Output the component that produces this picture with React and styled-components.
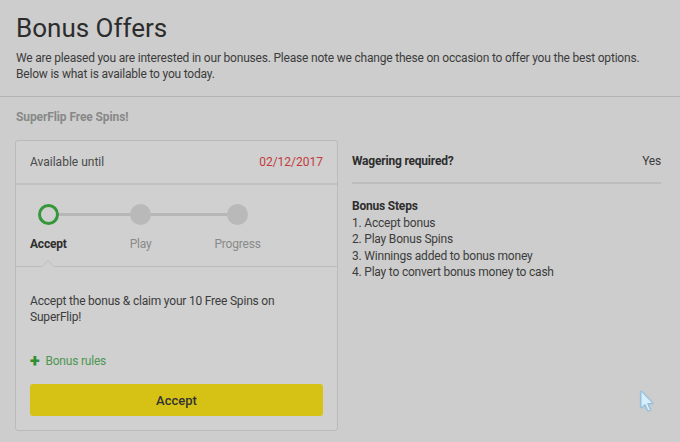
import React from "react";
import styled, { createGlobalStyle } from "styled-components";

const GlobalStyle = createGlobalStyle`
  html, body {
    margin: 0;
    padding: 0;
    background: #cdcdcd;
    font-family: Roboto, "Liberation Sans", Arial, sans-serif;
    color: #3a3a3a;
  }
  * { box-sizing: border-box; }
`;

const steps = ["Accept", "Play", "Progress"];
const bonusSteps = [
  "1. Accept bonus",
  "2. Play Bonus Spins",
  "3. Winnings added to bonus money",
  "4. Play to convert bonus money to cash",
];

function Cursor() {
  return (
    <CursorWrap width="22" height="26" viewBox="0 0 22 26">
      <defs>
        <filter id="glow" x="-50%" y="-50%" width="200%" height="200%">
          <feGaussianBlur stdDeviation="1.4" />
        </filter>
      </defs>
      <path
        d="M3 2 L3 19 L7 15.5 L10 22 L12.5 21 L9.6 14.6 L15 14.4 Z"
        fill="#5aa8e0"
        opacity="0.55"
        filter="url(#glow)"
      />
      <path
        d="M3 2 L3 19 L7 15.5 L10 22 L12.5 21 L9.6 14.6 L15 14.4 Z"
        fill="#d9eefb"
        stroke="#7ab6de"
        strokeWidth="0.8"
      />
    </CursorWrap>
  );
}

export default function App() {
  return (
    <Page>
      <GlobalStyle />
      <Intro>
        <Title>Bonus Offers</Title>
        <Lead>
          We are pleased you are interested in our bonuses. Please note we change these on
          occasion to offer you the best options. Below is what is available to you today.
        </Lead>
      </Intro>
      <Offer>
        <OfferName>SuperFlip Free Spins!</OfferName>
        <OfferGrid>
          <Card>
            <CardHeader>
              <span>Available until</span>
              <DateText>02/12/2017</DateText>
            </CardHeader>
            <Stepper>
              <Track />
              {steps.map((s, i) => (
                <Step key={s}>
                  <Dot $active={i === 0} />
                  <StepLabel $active={i === 0}>{s}</StepLabel>
                </Step>
              ))}
              <Caret />
            </Stepper>
            <CardBody>
              <Description>
                Accept the bonus &amp; claim your 10 Free Spins on SuperFlip!
              </Description>
              <RulesLink>
                <Plus>+</Plus>
                Bonus rules
              </RulesLink>
              <AcceptButton>Accept</AcceptButton>
            </CardBody>
          </Card>
          <Details>
            <DetailRow>
              <strong>Wagering required?</strong>
              <span>Yes</span>
            </DetailRow>
            <StepsBlock>
              <StepsTitle>Bonus Steps</StepsTitle>
              {bonusSteps.map((s) => (
                <div key={s}>{s}</div>
              ))}
            </StepsBlock>
          </Details>
        </OfferGrid>
      </Offer>
      <Cursor />
    </Page>
  );
}

const Page = styled.div`
  position: relative;
  width: 680px;
  height: 442px;
  overflow: hidden;
`;

const Intro = styled.div`
  padding: 12px 16px 14px;
  border-bottom: 1px solid #b3b3b3;
`;

const Title = styled.h1`
  margin: 0 0 6px;
  font-size: 26px;
  line-height: 32px;
  font-weight: 400;
  color: #2c2c2c;
`;

const Lead = styled.p`
  margin: 0;
  width: 640px;
  font-size: 12px;
  line-height: 16px;
  letter-spacing: -0.2px;
  color: #3c3c3c;
`;

const Offer = styled.div`
  padding: 13px 19px 0 15px;
`;

const OfferName = styled.div`
  padding-left: 1px;
  font-size: 12px;
  line-height: 14px;
  font-weight: 700;
  letter-spacing: -0.1px;
  color: #888;
  margin-bottom: 16px;
`;

const OfferGrid = styled.div`
  display: grid;
  grid-template-columns: 323px 1fr;
  gap: 14px;
  align-items: start;
`;

const Card = styled.div`
  border: 1px solid #bababa;
  border-radius: 3px;
  background: #d0d0d0;
`;

const CardHeader = styled.div`
  height: 44px;
  display: flex;
  align-items: center;
  justify-content: space-between;
  padding: 0 14px;
  border-bottom: 2px solid #c0c0c0;
  font-size: 12px;
  color: #4a4a4a;
`;

const DateText = styled.span`
  color: #c23a3a;
`;

const Stepper = styled.div`
  position: relative;
  display: flex;
  gap: 63px;
  padding: 19px 14px 15px;
  border-bottom: 1px solid #bcbcbc;
`;

const Track = styled.div`
  position: absolute;
  top: 28px;
  left: 32px;
  width: 190px;
  height: 3px;
  background: #b7b7b7;
`;

const Step = styled.div`
  position: relative;
  display: flex;
  flex-direction: column;
  align-items: center;
  gap: 12px;
`;

const Dot = styled.div`
  width: 21px;
  height: 21px;
  border-radius: 50%;
  background: ${(p) => (p.$active ? "#d0d0d0" : "#b9b9b9")};
  border: ${(p) => (p.$active ? "3px solid #36973a" : "none")};
`;

const StepLabel = styled.div`
  font-size: 12px;
  line-height: 14px;
  letter-spacing: -0.2px;
  font-weight: ${(p) => (p.$active ? 700 : 400)};
  color: ${(p) => (p.$active ? "#2e2e2e" : "#8a8a8a")};
`;

const Caret = styled.div`
  position: absolute;
  left: 25px;
  bottom: -1px;
  width: 14px;
  height: 8px;
  &::before,
  &::after {
    content: "";
    position: absolute;
    left: 0;
    border-left: 7px solid transparent;
    border-right: 7px solid transparent;
  }
  &::before {
    bottom: 0;
    border-bottom: 7px solid #bcbcbc;
  }
  &::after {
    bottom: -1px;
    border-bottom: 7px solid #d0d0d0;
  }
`;

const CardBody = styled.div`
  padding: 26px 14px 14px;
`;

const Description = styled.p`
  margin: 0;
  width: 262px;
  font-size: 12px;
  line-height: 16px;
  letter-spacing: -0.2px;
  color: #3c3c3c;
`;

const RulesLink = styled.div`
  display: flex;
  align-items: center;
  gap: 6px;
  margin-top: 28px;
  font-size: 12px;
  line-height: 16px;
  letter-spacing: -0.2px;
  color: #4e9650;
`;

const Plus = styled.span`
  font-size: 18px;
  font-weight: 900;
  color: #2f8f32;
  line-height: 16px;
`;

const AcceptButton = styled.button`
  display: block;
  width: 100%;
  height: 32px;
  margin-top: 15px;
  border: none;
  border-radius: 3px;
  background: #d5c215;
  font-family: Roboto, "Liberation Sans", Arial, sans-serif;
  font-size: 13px;
  font-weight: 500;
  color: #333;
`;

const Details = styled.div`
  font-size: 12px;
  letter-spacing: -0.2px;
  color: #3c3c3c;
`;

const DetailRow = styled.div`
  height: 44px;
  display: flex;
  align-items: center;
  justify-content: space-between;
  border-bottom: 2px solid #bdbdbd;
  strong {
    font-weight: 700;
    color: #2e2e2e;
  }
`;

const StepsBlock = styled.div`
  padding-top: 14px;
  line-height: 16.5px;
`;

const StepsTitle = styled.div`
  font-weight: 700;
  color: #2e2e2e;
`;

const CursorWrap = styled.svg`
  position: absolute;
  left: 638px;
  top: 389px;
`;
